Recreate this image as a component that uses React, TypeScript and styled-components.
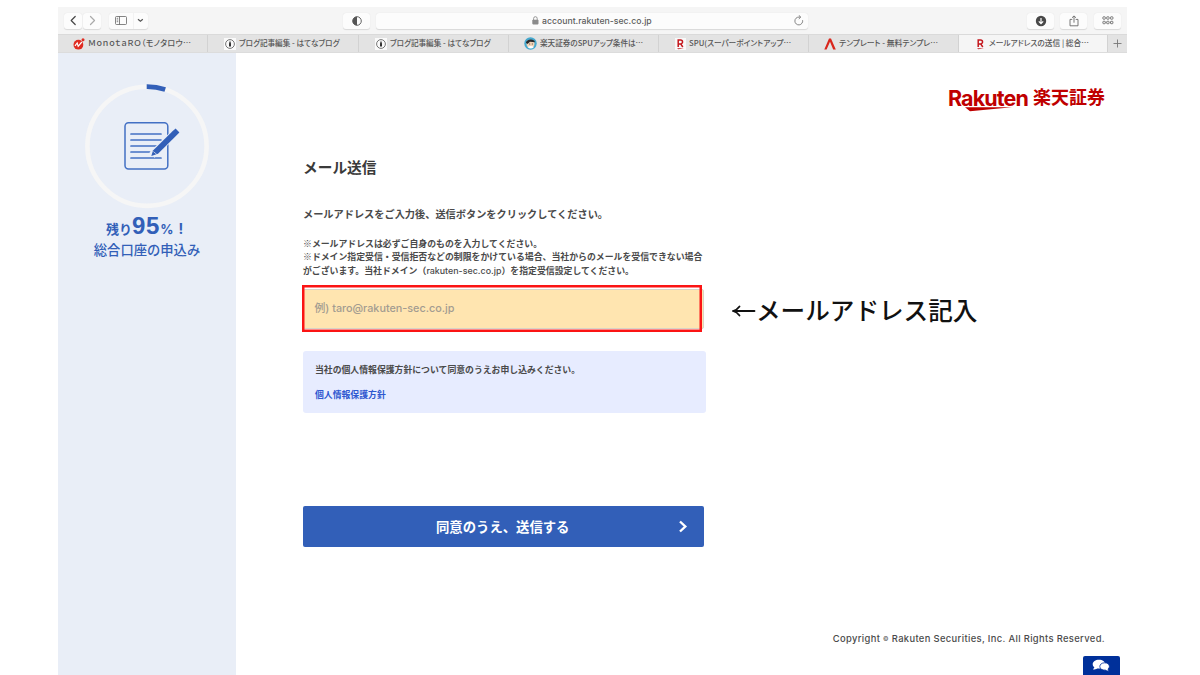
import React from "react";
import styled, { createGlobalStyle } from "styled-components";

const GlobalStyle = createGlobalStyle`
  html, body { margin: 0; padding: 0; background: #fff; }
  *, *::before, *::after { box-sizing: border-box; }
  body {
    font-family: Inter, "Noto Sans CJK JP", sans-serif;
    color: #4a4a4a;
    overflow: hidden;
  }
  p, h1 { margin: 0; }
  svg { display: block; flex: none; }
`;

const Screen = styled.div`
  width: 1200px;
  height: 675px;
  padding: 7px 73px 0 58px;
  background: #fff;
  overflow: hidden;
`;

const Window = styled.div`
  height: 668px;
  display: flex;
  flex-direction: column;
`;

const Toolbar = styled.header`
  height: 27px;
  flex: none;
  display: flex;
  align-items: center;
  padding: 0 6px;
  background: #f5f5f5;
`;

const ToolButton = styled.span<{ $w: number; $gap?: number }>`
  width: ${(p) => p.$w}px;
  height: 16px;
  margin-left: ${(p) => p.$gap ?? 0}px;
  flex: none;
  display: flex;
  align-items: center;
  justify-content: center;
  border-radius: 3px;
  background: #fcfcfc;
  box-shadow: 0 0.5px 1px rgba(0, 0, 0, 0.12);
`;

const SplitButton = styled(ToolButton)`
  justify-content: flex-start;
`;

const SplitPart = styled.span<{ $w: number; $line?: boolean }>`
  width: ${(p) => p.$w}px;
  height: 16px;
  display: flex;
  align-items: center;
  justify-content: center;
  border-right: ${(p) => (p.$line ? "1px solid #f2f2f2" : "none")};
`;

const AddressBar = styled.div`
  width: 432px;
  height: 16px;
  margin-left: 6px;
  padding: 0 4px 0 156px;
  display: flex;
  align-items: center;
  border-radius: 3px;
  background: #fcfcfc;
  box-shadow: 0 0.5px 1px rgba(0, 0, 0, 0.12);
  font-size: 8.7px;
  font-weight: 500;
  line-height: 16px;
  color: #5c5c5c;
`;

const Host = styled.span`
  margin-left: 3px;
  flex: 1;
`;

const ToolbarEnd = styled.div`
  display: flex;
  margin-left: auto;
`;

const TabBar = styled.nav`
  height: 19px;
  flex: none;
  display: grid;
  grid-template-columns: 150px 151px 150px 150px 150px 150px 149px 19px;
  background: #e3e3e3;
  border-top: 1px solid #dadada;
  border-bottom: 1px solid #dcdcdc;
`;

const Tab = styled.div<{ $active?: boolean; $pad: number }>`
  display: flex;
  align-items: center;
  padding-left: ${(p) => p.$pad}px;
  gap: 3px;
  white-space: nowrap;
  overflow: hidden;
  color: #555;
  background: ${(p) => (p.$active ? "#f5f5f5" : "transparent")};
  border-right: 1px solid #d2d2d2;
`;

const TabTitle = styled.span<{ $size?: number; $track?: number }>`
  padding-bottom: 1px;
  font-family: "Noto Sans CJK JP", sans-serif;
  font-size: ${(p) => p.$size ?? 8}px;
  font-weight: 500;
  font-feature-settings: "palt";
  letter-spacing: ${(p) => p.$track ?? 0}px;
  line-height: 16px;
`;

const NewTab = styled.div`
  display: flex;
  align-items: center;
  justify-content: center;
`;

const Page = styled.div`
  flex: 1;
  display: flex;
  min-height: 0;
`;

const Sidebar = styled.aside`
  width: 178px;
  flex: none;
  padding-top: 31px;
  background: #e9eef7;
  display: flex;
  flex-direction: column;
  align-items: center;
  color: #325fb8;
`;

const Remaining = styled.p`
  margin: 3px 5px 0 0;
  height: 26px;
  display: flex;
  align-items: baseline;
  font-size: 13px;
  font-weight: 700;
  line-height: 26px;
  white-space: nowrap;
`;

const Percent = styled.span`
  font-family: "Liberation Sans", Arial, sans-serif;
  font-size: 24px;
  letter-spacing: 0.8px;
`;

const Unit = styled.span`
  font-size: 13px;
`;

const Bang = styled.span`
  margin-left: 5px;
  font-size: 14px;
`;

const Application = styled.p`
  margin-top: 1px;
  font-size: 13.3px;
  font-weight: 500;
  line-height: 20px;
`;

const Main = styled.main`
  flex: 1;
  padding: 31px 22px 0 67px;
  display: flex;
  flex-direction: column;

  > * {
    flex: none;
  }
`;

const BrandRow = styled.div`
  height: 28px;
  display: flex;
  align-items: center;
  justify-content: flex-end;
  gap: 4px;
  color: #bf0000;
`;

const Brand = styled.span`
  position: relative;
  width: 81px;
  font-size: 21.5px;
  font-weight: 700;
  line-height: 24px;
  letter-spacing: -0.9px;
  white-space: nowrap;
`;

const Swoosh = styled.svg`
  position: absolute;
  left: 17px;
  top: 20.5px;
`;

const BrandJa = styled.span`
  font-size: 18px;
  font-weight: 700;
  line-height: 24px;
`;

const Title = styled.h1`
  margin-top: 46px;
  font-size: 14.7px;
  font-weight: 700;
  line-height: 20px;
  color: #3a3a3a;
`;

const Lead = styled.p`
  margin-top: 28px;
  font-size: 10.2px;
  font-weight: 700;
  line-height: 16px;
`;

const Notes = styled.div`
  height: 41px;
  margin-top: 15px;
  font-size: 8.9px;
  font-weight: 700;
  line-height: 13.4px;
  white-space: nowrap;
`;

const NoteMark = styled.span`
  font-family: "Noto Sans CJK JP", sans-serif;
`;

const Domain = styled.span`
  font-weight: 500;
`;

const FieldRow = styled.div`
  margin-top: 11px;
  display: flex;
  align-items: center;
`;

const Field = styled.div`
  position: relative;
  width: 401px;
  height: 40px;
  padding-left: 10.5px;
  border: 1px solid #d9d3c6;
  border-radius: 2px;
  background: #ffe5b0;
  font-size: 10.8px;
  font-weight: 500;
  line-height: 38px;
  color: #a39c90;

  &::after {
    content: "";
    position: absolute;
    left: -2px;
    top: -5px;
    width: 400px;
    height: 47px;
    border: 2px solid #fb1414;
    box-shadow: inset 0 0 0 0.5px #fb1414;
  }
`;

const Callout = styled.span`
  margin-left: 27px;
  padding-top: 4px;
  font-size: 24.6px;
  font-weight: 500;
  line-height: 40px;
  color: #111;
  display: flex;
  align-items: center;
  height: 40px;
  white-space: nowrap;
`;

const Consent = styled.section`
  width: 403px;
  height: 62px;
  margin-top: 22px;
  padding: 12px;
  border-radius: 3px;
  background: #e7ecff;
  font-size: 8.85px;
  font-weight: 700;
  line-height: 13px;
`;

const PolicyLink = styled.a`
  display: block;
  margin-top: 12px;
  font-weight: 700;
  color: #2e58d0;
`;

const Submit = styled.button`
  width: 401px;
  height: 41px;
  margin-top: 93px;
  padding: 0 16px 0 133px;
  display: flex;
  align-items: center;
  justify-content: space-between;
  border: 0;
  border-radius: 2px;
  background: #325fb8;
  color: #fff;
  font-family: inherit;
  font-size: 13.35px;
  font-weight: 700;
`;

const Footer = styled.footer`
  margin-top: 84px;
  display: flex;
  flex-direction: column;
  align-items: flex-end;
`;

const Copyright = styled.p`
  font-size: 9.4px;
  font-weight: 500;
  line-height: 16px;
  letter-spacing: 0.35px;
  white-space: nowrap;
`;

const Mark = styled.span`
  font-size: 6px;
  vertical-align: 1px;
`;

const Chat = styled.div`
  width: 37px;
  height: 21px;
  margin: 9px -14.5px 0 0;
  padding-top: 3px;
  display: flex;
  justify-content: center;
  border-radius: 2px 2px 0 0;
  background: #00309a;
`;

const Chevron = ({ dir, color }: { dir: "left" | "right"; color: string }) => (
  <svg width="7" height="11" viewBox="0 0 7 11" fill="none" stroke={color} strokeWidth="1.2" strokeLinecap="round" strokeLinejoin="round">
    <path d={dir === "left" ? "M5.2 1.5L1.2 5.5L5.2 9.5" : "M1.5 1.5L5.5 5.5L1.5 9.5"} />
  </svg>
);

const HatenaIcon = () => (
  <svg width="12" height="12" viewBox="0 0 12 12">
    <rect width="12" height="12" fill="#fafafa" />
    <circle cx="6" cy="6" r="4.4" fill="none" stroke="#555" strokeWidth=".8" />
    <path d="M5 8.5V5.2L6 2.8L7 5.2V8.5Z" fill="#333" />
  </svg>
);

const MonotaroIcon = () => (
  <svg width="12" height="12" viewBox="0 0 12 12">
    <circle cx="5.4" cy="6.7" r="4.9" fill="#e02b20" />
    <circle cx="10" cy="1.8" r="1.5" fill="#e02b20" />
    <path d="M2 7.8L4.2 5L5.2 8.3L8.8 4" fill="none" stroke="#fff" strokeWidth="1.2" />
  </svg>
);

const AvatarIcon = () => (
  <svg width="13" height="13" viewBox="0 0 13 13">
    <circle cx="6.5" cy="6.5" r="6.2" fill="#45a9cf" />
    <circle cx="6.5" cy="6.8" r="4" fill="#f2d3b5" />
    <path d="M2 6C2 2 10.5 1 11 5.2L6 4.8L3.5 7Z" fill="#28292b" />
    <path d="M3.5 10Q7 8 10 10Q6.8 13 3.5 10Z" fill="#fff" />
    <path d="M5 7H6.2M7.8 7H9" stroke="#333" strokeWidth=".7" />
  </svg>
);

const RIcon = ({ bg }: { bg: string }) => (
  <svg width="11" height="12" viewBox="0 0 11 12">
    <rect width="11" height="12" fill={bg} />
    <path d="M3.2 9V2H5.6A1.9 1.9 0 0 1 5.6 5.9H3.4M5.7 5.8L7.8 9" fill="none" stroke="#c4161c" strokeWidth="1.5" />
    <path d="M2 10.2H9L3.4 11.3Z" fill="#c4161c" />
  </svg>
);

const PeakIcon = () => (
  <svg width="12" height="12" viewBox="0 0 12 12">
    <path d="M.3 11.5L5 .5H7L11.8 11.5H9.2L6 3.8L2.6 11.5Z" fill="#d9261c" />
  </svg>
);

const ProgressRing = () => (
  <svg width="126" height="126" viewBox="0 0 126 126" fill="none">
    <circle cx="63" cy="62.3" r="59.6" stroke="#f6f6f6" strokeWidth="4.6" />
    <path d="M62.7 2.7A59.6 59.6 0 0 1 81.2 5.5" stroke="#325fb8" strokeWidth="4.8" />
    <rect x="41" y="38.7" width="42.8" height="46.4" rx="3.5" stroke="#4370c4" strokeWidth="1.5" />
    <path d="M47 50H77M47 56H77M47 62H73M47 68H67M47 74H77" stroke="#4370c4" strokeWidth="1.7" strokeLinecap="round" />
    <path d="M68 71L93 47" stroke="#e9eef7" strokeWidth="7.5" />
    <path d="M69 66.5L88.5 47.2L91.6 44.6L95.4 48.4L74 69.8L67.3 72Z" fill="#325fb8" />
    <path d="M69.4 67.6L72.8 70.4" stroke="#e9eef7" strokeWidth=".7" />
  </svg>
);

export default function App() {
  return (
    <>
      <GlobalStyle />
      <Screen>
        <Window>
          <Toolbar>
            <ToolButton $w={18}><Chevron dir="left" color="#444" /></ToolButton>
            <ToolButton $w={18} $gap={1}><Chevron dir="right" color="#aaa" /></ToolButton>
            <SplitButton $w={39} $gap={8}>
              <SplitPart $w={25} $line>
                <svg width="12" height="9" viewBox="0 0 12 9" fill="none" stroke="#666" strokeWidth=".8">
                  <rect x=".5" y=".5" width="11" height="8" rx="1" />
                  <path d="M4.5 .5V8.5M1.7 2.3H3.2M1.7 4H3.2M1.7 5.7H3.2" />
                </svg>
              </SplitPart>
              <SplitPart $w={13}>
                <svg width="7" height="5" viewBox="0 0 7 5" fill="none" stroke="#555" strokeWidth="1.2">
                  <path d="M1 1.2L3.4 3.3L5.8 1.2" />
                </svg>
              </SplitPart>
            </SplitButton>
            <ToolButton $w={27} $gap={195}>
              <svg width="10" height="10" viewBox="0 0 10 10">
                <circle cx="5" cy="5" r="4.3" fill="none" stroke="#555" strokeWidth=".9" />
                <path d="M5 .7A4.3 4.3 0 0 0 5 9.3Z" fill="#555" />
              </svg>
            </ToolButton>
            <AddressBar>
              <svg width="7" height="9" viewBox="0 0 7 9">
                <rect x=".3" y="3.8" width="6.2" height="4.6" rx=".8" fill="#8b8b8b" />
                <path d="M1.6 4V2.5A1.8 1.8 0 0 1 5.2 2.5V4" fill="none" stroke="#8b8b8b" strokeWidth=".9" />
              </svg>
              <Host>account.rakuten-sec.co.jp</Host>
              <svg width="10" height="11" viewBox="0 0 10 11" fill="none" stroke="#777" strokeWidth=".9">
                <path d="M8.6 5.2A3.9 3.9 0 1 1 5 2.1H6.3" />
                <path d="M4.8 .3L6.8 2.1L4.8 4" />
              </svg>
            </AddressBar>
            <ToolbarEnd>
              <ToolButton $w={27}>
                <svg width="12" height="12" viewBox="0 0 12 12">
                  <circle cx="6" cy="6" r="5.2" fill="#484848" />
                  <path d="M6 3V8.4M3.8 6.4L6 8.6L8.2 6.4" fill="none" stroke="#fff" strokeWidth="1.2" />
                </svg>
              </ToolButton>
              <ToolButton $w={27} $gap={6}>
                <svg width="10" height="12" viewBox="0 0 10 12" fill="none" stroke="#6a6a6a" strokeWidth=".9">
                  <path d="M3.3 4.4H1V10.8H9V4.4H6.7M5 7.7V1M3 2.8L5 .9L7 2.8" />
                </svg>
              </ToolButton>
              <ToolButton $w={27} $gap={7}>
                <svg width="12" height="9" viewBox="0 0 12 9" fill="none" stroke="#666" strokeWidth=".9">
                  {[0.9, 4.7, 8.5].map((x) => (
                    <React.Fragment key={x}>
                      <rect x={x} y=".8" width="2.4" height="2.4" rx=".6" />
                      <rect x={x} y="5.3" width="2.4" height="2.4" rx=".6" />
                    </React.Fragment>
                  ))}
                </svg>
              </ToolButton>
            </ToolbarEnd>
          </Toolbar>

          <TabBar>
            <Tab $pad={15}><MonotaroIcon /><TabTitle $track={0.32}>ＭｏｎｏｔａＲＯ（モノタロウ…</TabTitle></Tab>
            <Tab $pad={16}><HatenaIcon /><TabTitle $size={7.6}>ブログ記事編集 - はてなブログ</TabTitle></Tab>
            <Tab $pad={16}><HatenaIcon /><TabTitle $size={7.6}>ブログ記事編集 - はてなブログ</TabTitle></Tab>
            <Tab $pad={15}><AvatarIcon /><TabTitle $size={7.6}>楽天証券のSPUアップ条件は…</TabTitle></Tab>
            <Tab $pad={16}><RIcon bg="#f8f8f8" /><TabTitle $size={7.7}>SPU(スーパーポイントアップ…</TabTitle></Tab>
            <Tab $pad={15}><PeakIcon /><TabTitle $size={7.8}>テンプレート - 無料テンプレ…</TabTitle></Tab>
            <Tab $pad={16} $active><RIcon bg="#f5f5f5" /><TabTitle $size={7.7}>メールアドレスの送信 | 総合…</TabTitle></Tab>
            <NewTab>
              <svg width="9" height="9" viewBox="0 0 9 9" stroke="#777" strokeWidth=".9"><path d="M4.5 .5V8.5M.5 4.5H8.5" /></svg>
            </NewTab>
          </TabBar>

          <Page>
            <Sidebar>
              <ProgressRing />
              <Remaining>残り<Percent>95</Percent><Unit>%</Unit><Bang>!</Bang></Remaining>
              <Application>総合口座の申込み</Application>
            </Sidebar>
            <Main>
              <BrandRow>
                <Brand>
                  Rakuten
                  <Swoosh width="48" height="5" viewBox="0 0 48 5"><path d="M0 .3H47L5 4.2Z" fill="#bf0000" /></Swoosh>
                </Brand>
                <BrandJa>楽天証券</BrandJa>
              </BrandRow>
              <Title>メール送信</Title>
              <Lead>メールアドレスをご入力後、送信ボタンをクリックしてください。</Lead>
              <Notes>
                <p><NoteMark>※</NoteMark>メールアドレスは必ずご自身のものを入力してください。</p>
                <p><NoteMark>※</NoteMark>ドメイン指定受信・受信拒否などの制限をかけている場合、当社からのメールを受信できない場合</p>
                <p>がございます。当社ドメイン（<Domain>rakuten-sec.co.jp</Domain>）を指定受信設定してください。</p>
              </Notes>
              <FieldRow>
                <Field>例) taro@rakuten-sec.co.jp</Field>
                <Callout>
                  <svg width="25" height="14" viewBox="0 0 25 14" fill="none" stroke="#111" strokeWidth="1.8" strokeLinecap="round" strokeLinejoin="round">
                    <path d="M23.5 7H2M8.5 2.5Q6 6 2 7Q6 8 8.5 11.5" />
                  </svg>
                  メールアドレス記入
                </Callout>
              </FieldRow>
              <Consent>
                <p>当社の個人情報保護方針について同意のうえお申し込みください。</p>
                <PolicyLink>個人情報保護方針</PolicyLink>
              </Consent>
              <Submit>
                同意のうえ、送信する
                <svg width="10" height="13" viewBox="0 0 10 13" fill="none" stroke="#fff" strokeWidth="2.4"><path d="M2 1.5L7.3 6.5L2 11.5" /></svg>
              </Submit>
              <Footer>
                <Copyright>Copyright <Mark>©</Mark> Rakuten Securities, Inc. All Rights Reserved.</Copyright>
                <Chat>
                  <svg width="18" height="13" viewBox="0 0 18 13" fill="#fff">
                    <path d="M7 .8C3.4 .8 .7 2.7 .7 5.2C.7 6.5 1.4 7.6 2.4 8.3L1 10.6C2.8 10.5 4.3 10 5.2 9.4C10 10 13.2 7.8 13.2 5.2C13.2 2.7 10.6 .8 7 .8Z" />
                    <path d="M12.6 3.8C15.4 3.8 17.4 5.3 17.4 7.4C17.4 8.5 16.8 9.4 16 10L17 12.2C15.4 12.2 14.2 11.7 13.4 11.1C10.2 11.4 7.8 9.8 7.8 7.5C7.8 5.4 9.8 3.8 12.6 3.8Z" stroke="#00309a" strokeWidth=".8" />
                  </svg>
                </Chat>
              </Footer>
            </Main>
          </Page>
        </Window>
      </Screen>
    </>
  );
}
